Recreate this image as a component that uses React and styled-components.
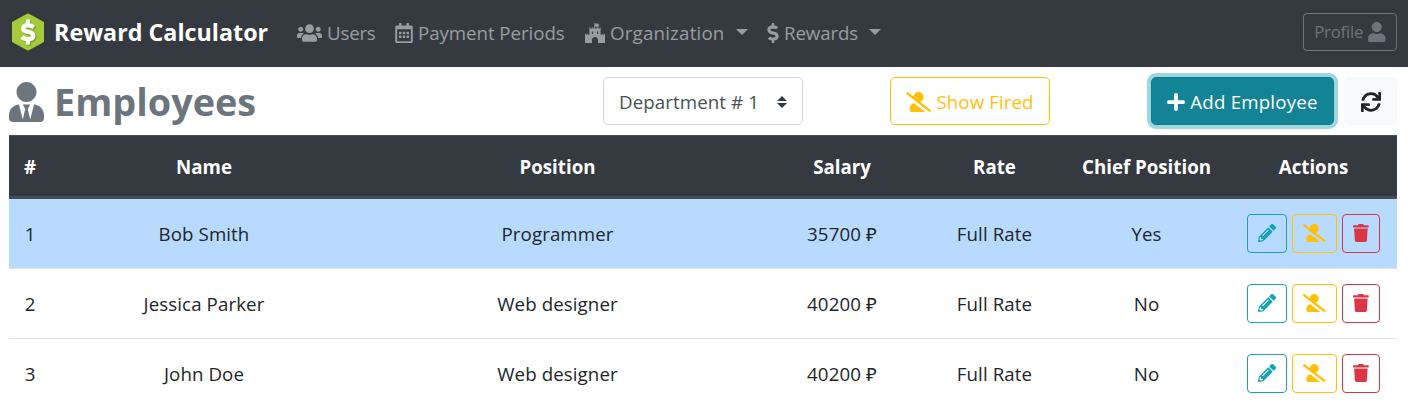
import React from "react";
import styled, { createGlobalStyle, css } from "styled-components";
import {
  FaUsers, FaRegCalendarAlt, FaDollarSign, FaUser, FaUserTie,
  FaUserSlash, FaPlus, FaSync, FaPencilAlt, FaTrash,
} from "react-icons/fa";

const GlobalStyle = createGlobalStyle`
  *, *::before, *::after { box-sizing: border-box; }
  body {
    margin: 0;
    background: #fff;
    color: #212529;
    font-family: "Open Sans", "Noto Sans", sans-serif;
    font-size: 18.7px;
    line-height: 30px;
    overflow: hidden;
  }
  button { font: inherit; margin: 0; cursor: pointer; }
  svg { display: block; flex: none; }
`;

const Navbar = styled.nav`
  display: flex;
  align-items: center;
  height: 67px;
  padding: 0 11px 3px 10px;
  background: #343a40;
`;

const Brand = styled.a`
  display: flex;
  align-items: center;
  gap: 8px;
  width: 287px;
  color: #fff;
  font-size: 23.3px;
  font-weight: 700;
  white-space: nowrap;
`;

const NavItem = styled.a`
  display: flex;
  align-items: center;
  gap: 5px;
  flex: none;
  width: ${(p) => p.$width}px;
  padding-top: 2px;
  color: rgba(255, 255, 255, 0.5);
  white-space: nowrap;
`;

const Icon = styled.span`
  display: inline-flex;
  flex: none;
  svg { width: ${(p) => p.$w}px; height: ${(p) => p.$h}px; }
`;

const Label = styled.span`
  flex: none;
  white-space: nowrap;
  letter-spacing: ${(p) => p.$track || 0}px;
`;

const Caret = styled.span`
  margin-left: 6px;
  margin-top: -2px;
  border: 6px solid transparent;
  border-top-color: currentColor;
  border-bottom: 0;
`;

const ProfileButton = styled.button`
  display: flex;
  align-items: center;
  justify-content: center;
  gap: 5px;
  width: 94px;
  height: 38px;
  margin-left: auto;
  padding: 0;
  border: 1px solid #6c757d;
  border-radius: 4px;
  background: transparent;
  color: #6c757d;
  font-size: 16.8px;
`;

const Toolbar = styled.header`
  display: flex;
  align-items: center;
  height: 68px;
  padding: 0 11px 0 9px;
`;

const Title = styled.h1`
  display: flex;
  align-items: center;
  gap: 10px;
  width: 594px;
  margin: 0;
  padding-top: 2px;
  color: #6c757d;
  font-size: 37.8px;
  font-weight: 700;
  line-height: 48px;
`;

const Select = styled.div`
  display: flex;
  align-items: center;
  justify-content: space-between;
  width: 200px;
  height: 48px;
  margin-right: 87px;
  padding: 1px 15px 0;
  border: 1px solid #ced4da;
  border-radius: 5px;
  color: #495057;
`;

const variants = {
  warning: css`border-color: #ffc107; color: #ffc107; background: transparent;`,
  info: css`
    border-color: #117a8b; color: #fff; background: #138496;
    box-shadow: 0 0 0 4px rgba(58, 176, 195, 0.5);
  `,
  light: css`border-color: #f8f9fa; color: #212529; background: #f8f9fa;`,
};

const Button = styled.button`
  display: flex;
  align-items: center;
  justify-content: center;
  gap: 5px;
  width: ${(p) => p.$width}px;
  height: 48px;
  padding: 2px 0 0;
  border: 1px solid;
  border-radius: 5px;
  ${(p) => variants[p.$variant]}
`;

const ButtonGroup = styled.div`
  display: flex;
  gap: 10px;
  margin-left: auto;
`;

const Table = styled.div`
  margin: 0 11px 0 9px;
`;

const Row = styled.div`
  display: grid;
  grid-template-columns: 42px 306px 401px 168px 137px 167px 167px;
  align-items: center;
  justify-items: center;
  height: 70px;
  border-top: 1px solid #dee2e6;
  ${(p) => p.$active && css`height: 69px; border-top: 0; background: #b8daff;`}
`;

const HeadRow = styled(Row)`
  height: 64px;
  padding-top: 2px;
  border-top: 1px solid #454d55;
  border-bottom: 3px solid #454d55;
  background: #343a40;
  color: #fff;
  font-weight: 700;
`;

const Actions = styled.div`
  display: flex;
  gap: 5px;
`;

const ActionButton = styled.button`
  display: flex;
  align-items: center;
  justify-content: center;
  width: ${(p) => p.$width}px;
  height: 39px;
  padding: 0 0 1px;
  border: 1px solid ${(p) => p.$color};
  border-radius: 4px;
  background: transparent;
  color: ${(p) => p.$color};
`;

function Logo() {
  return (
    <svg width="36" height="38" viewBox="0 0 36 38">
      <path d="M18 1.500 33 9.700v18.600L18 36.500 3 28.300V9.700z" fill="#a4cb39" stroke="#a4cb39" strokeWidth="2" strokeLinejoin="round" />
      <g fill="none" stroke="#6f9426" opacity="0.75" transform="translate(1.300 1.300)">
        <path d="M23.800 14.300C22 12.600 20 12.200 18 12.200c-3 0-4.800 1.300-4.800 3.300 0 4.700 10 2.200 10 7 0 2.400-2 3.700-5.200 3.700-2.300 0-4.400-.6-6.200-2.200" strokeWidth="4.400" />
        <path d="M18 6.500v6M18 26v5.500" strokeWidth="4" />
      </g>
      <g fill="none" stroke="#fff">
        <path d="M23.800 14.300C22 12.600 20 12.200 18 12.200c-3 0-4.800 1.300-4.800 3.300 0 4.700 10 2.200 10 7 0 2.400-2 3.700-5.200 3.700-2.300 0-4.400-.6-6.200-2.200" strokeWidth="4.400" />
        <path d="M18 6.500v6M18 26v5.500" strokeWidth="4" />
      </g>
    </svg>
  );
}

function Castle() {
  return (
    <svg viewBox="0 0 20 20" fill="currentColor" fillRule="evenodd">
      <path d="M9.300 0h.9v.6c1 .3 2.100-.3 3.600.3v3c-1.400-.5-2.500 0-3.600-.3v2.200h1.300V4.600h1.900v1.200h1.200V4.600h1v7.400h1V10.700h1.100V12h1V10.700H20V20h-7v-3c0-4-6-4-6 0v3H0v-9.300h1.300V12h1v-1.300h1.100V12h1V4.600h1v1.200h1.200V4.600h1.900v1.200h.8zM6.800 8.500v2.600h1.100V8.500zM12.100 8.500v2.600h1.100V8.500z" />
    </svg>
  );
}

function SortArrows() {
  return (
    <svg width="10" height="12" viewBox="0 0 10 12" fill="#343a40">
      <path d="M5 0 10 5H0zM5 12 0 7h10z" />
    </svg>
  );
}

const headings = ["#", "Name", "Position", "Salary", "Rate", "Chief Position", "Actions"];

const employees = [
  { id: 1, name: "Bob Smith", position: "Programmer", salary: "35700 ₽", rate: "Full Rate", chief: "Yes", active: true },
  { id: 2, name: "Jessica Parker", position: "Web designer", salary: "40200 ₽", rate: "Full Rate", chief: "No" },
  { id: 3, name: "John Doe", position: "Web designer", salary: "40200 ₽", rate: "Full Rate", chief: "No" },
];

function EmployeeRow({ employee }) {
  return (
    <Row $active={employee.active}>
      <Label>{employee.id}</Label>
      <Label $track={0.1}>{employee.name}</Label>
      <Label $track={0.1}>{employee.position}</Label>
      <Label $track={0.1}>{employee.salary}</Label>
      <Label $track={0.1}>{employee.rate}</Label>
      <Label>{employee.chief}</Label>
      <Actions>
        <ActionButton $width={40} $color="#17a2b8"><Icon $w={18} $h={18}><FaPencilAlt /></Icon></ActionButton>
        <ActionButton $width={45} $color="#ffc107"><Icon $w={22.500} $h={18}><FaUserSlash /></Icon></ActionButton>
        <ActionButton $width={38} $color="#dc3545"><Icon $w={15.750} $h={18}><FaTrash /></Icon></ActionButton>
      </Actions>
    </Row>
  );
}

export default function App() {
  return (
    <>
      <GlobalStyle />
      <Navbar>
        <Brand><Logo /><Label>Reward Calculator</Label></Brand>
        <NavItem $width={98}><Icon $w={25} $h={20}><FaUsers /></Icon><Label $track={-0.2}>Users</Label></NavItem>
        <NavItem $width={190}><Icon $w={18} $h={20}><FaRegCalendarAlt /></Icon><Label $track={-0.05}>Payment Periods</Label></NavItem>
        <NavItem $width={182}><Icon $w={20} $h={20}><Castle /></Icon><Label $track={0.2}>Organization</Label><Caret /></NavItem>
        <NavItem $width={120}><Icon $w={12} $h={20}><FaDollarSign /></Icon><Label $track={-0.1}>Rewards</Label><Caret /></NavItem>
        <ProfileButton><Label $track={-0.2}>Profile</Label><Icon $w={17.500} $h={20}><FaUser /></Icon></ProfileButton>
      </Navbar>
      <Toolbar>
        <Title><Icon $w={35} $h={40}><FaUserTie /></Icon><Label>Employees</Label></Title>
        <Select><Label $track={0.1}>Department # 1</Label><SortArrows /></Select>
        <Button $variant="warning" $width={160}><Icon $w={25} $h={20}><FaUserSlash /></Icon><Label $track={0.1}>Show Fired</Label></Button>
        <ButtonGroup>
          <Button $variant="info" $width={183}><Icon $w={18} $h={20}><FaPlus /></Icon><Label $track={0.2}>Add Employee</Label></Button>
          <Button $variant="light" $width={53}><Icon $w={20} $h={20}><FaSync /></Icon></Button>
        </ButtonGroup>
      </Toolbar>
      <Table>
        <HeadRow>
          {headings.map((text) => <Label key={text}>{text}</Label>)}
        </HeadRow>
        {employees.map((e) => <EmployeeRow key={e.id} employee={e} />)}
      </Table>
    </>
  );
}
